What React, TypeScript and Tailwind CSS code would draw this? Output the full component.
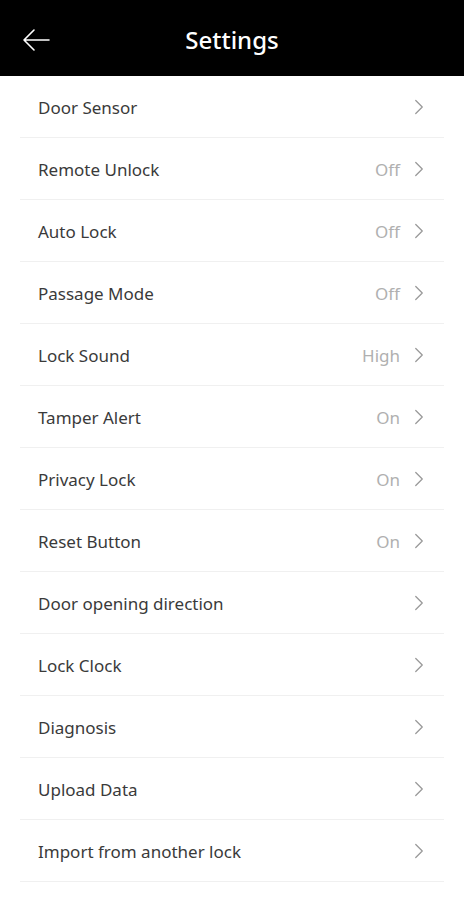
import { ChevronRight } from 'lucide-react'

const rows: { label: string; value?: string }[] = [
  { label: 'Door Sensor' },
  { label: 'Remote Unlock', value: 'Off' },
  { label: 'Auto Lock', value: 'Off' },
  { label: 'Passage Mode', value: 'Off' },
  { label: 'Lock Sound', value: 'High' },
  { label: 'Tamper Alert', value: 'On' },
  { label: 'Privacy Lock', value: 'On' },
  { label: 'Reset Button', value: 'On' },
  { label: 'Door opening direction' },
  { label: 'Lock Clock' },
  { label: 'Diagnosis' },
  { label: 'Upload Data' },
  { label: 'Import from another lock' },
]

export default function App() {
  return (
    <div className="min-h-screen bg-white" style={{ fontFamily: '"Noto Sans", sans-serif' }}>
      {/* Header */}
      <div className="relative flex h-[76px] items-center justify-center bg-black">
        <button className="absolute left-[20px] top-[24px] text-white">
          <svg width="32" height="32" viewBox="0 0 32 32" fill="none" stroke="currentColor" strokeWidth="1.6" strokeLinecap="round" strokeLinejoin="round">
            <path d="M29 16H4M14 6L4 16l10 10" />
          </svg>
        </button>
        <h1 className="mt-[4px] text-[24px] font-medium text-white">Settings</h1>
      </div>

      {/* List */}
      <div className="mx-[20px]">
        {rows.map((r) => (
          <div
            key={r.label}
            className="flex h-[62px] items-center border-b border-[#f0f0f0] pl-[18px] pr-[12px]"
          >
            <span className="flex-1 pt-[2px] text-[17px] text-[#3a3a3a]">{r.label}</span>
            {r.value && <span className="mr-[6px] pt-[2px] text-[17px] text-[#b0b0b0]">{r.value}</span>}
            <ChevronRight size={26} strokeWidth={1.2} className="text-[#9a9a9a]" />
          </div>
        ))}
      </div>
    </div>
  )
}
